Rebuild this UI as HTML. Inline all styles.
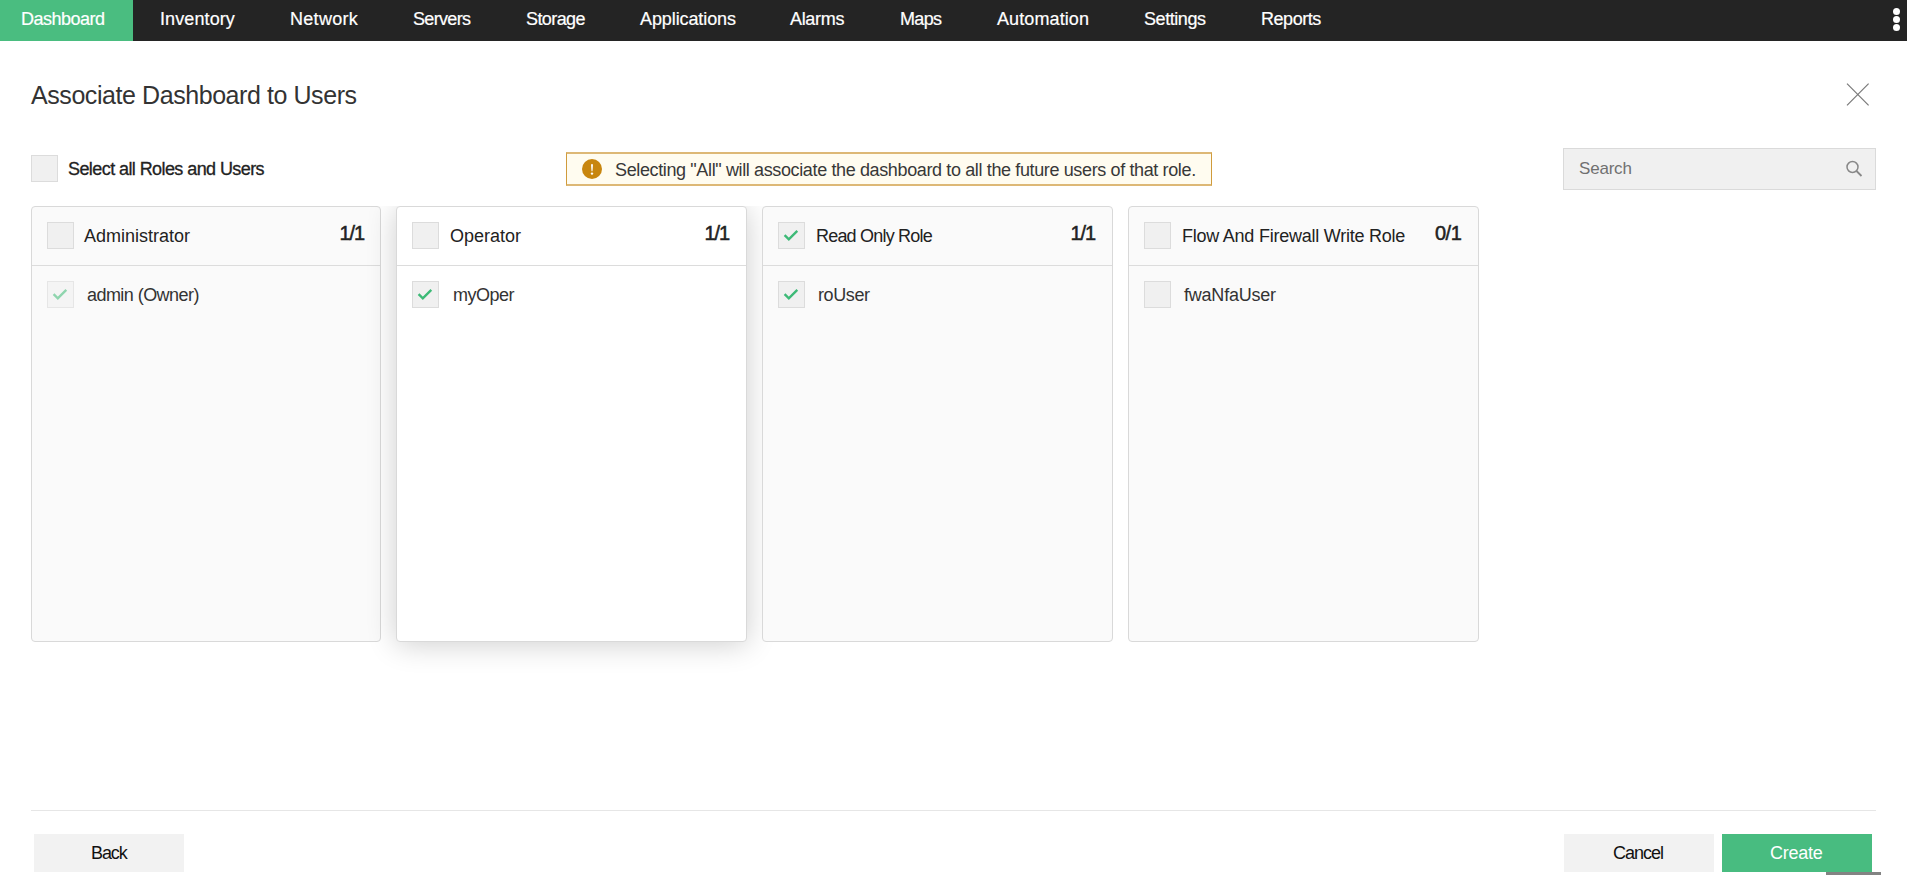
<!DOCTYPE html>
<html><head><meta charset="utf-8">
<style>
html,body{margin:0;padding:0;width:1907px;height:875px;overflow:hidden;background:#fff;}
body{position:relative;font-family:"Liberation Sans",sans-serif;}
.a{position:absolute;}
.t{position:absolute;white-space:nowrap;font-size:18px;line-height:18px;color:#333;}
.nav{position:absolute;left:0;top:0;width:1907px;height:41px;background:#242424;}
.nav .t{color:#fff;top:10px;-webkit-text-stroke:0.2px #fff;}
.navact{position:absolute;left:0;top:0;width:133px;height:41px;background:#4abd80;}
.dot{position:absolute;left:1892.5px;width:7px;height:7px;border-radius:50%;background:#fff;}
.cb{position:absolute;width:25px;height:25px;border:1px solid #dcdcdc;background:#f0f0f0;}
.card{position:absolute;top:206px;width:348px;height:434px;border:1px solid #d9d9d9;border-radius:4px;background:#fafafa;}
.card .hdr{position:absolute;left:0;top:58px;width:348px;height:1px;background:#dcdcdc;}
.cnt{font-size:20px !important;line-height:20px !important;color:#222;-webkit-text-stroke:0.5px #222;letter-spacing:-1.1px;}
.btn{position:absolute;top:834px;width:150px;height:38px;background:#f2f2f2;}
</style></head>
<body>
<div class="nav">
  <div class="navact"></div>
  <div class="t" style="left:21px;letter-spacing:-0.5px">Dashboard</div>
  <div class="t" style="left:160px;letter-spacing:0.1px">Inventory</div>
  <div class="t" style="left:290px;letter-spacing:0.3px">Network</div>
  <div class="t" style="left:413px;letter-spacing:-0.67px">Servers</div>
  <div class="t" style="left:526px;letter-spacing:-0.58px">Storage</div>
  <div class="t" style="left:640px;letter-spacing:-0.1px">Applications</div>
  <div class="t" style="left:790px;letter-spacing:-0.32px">Alarms</div>
  <div class="t" style="left:900px;letter-spacing:-0.67px">Maps</div>
  <div class="t" style="left:997px;letter-spacing:0.1px">Automation</div>
  <div class="t" style="left:1144px;letter-spacing:-0.43px">Settings</div>
  <div class="t" style="left:1261px;letter-spacing:-0.45px">Reports</div>
  <div class="dot" style="top:8px"></div>
  <div class="dot" style="top:16px"></div>
  <div class="dot" style="top:24px"></div>
</div>

<div class="t" style="left:31px;top:83px;font-size:25px;line-height:25px;color:#333;letter-spacing:-0.43px">Associate Dashboard to Users</div>
<svg class="a" style="left:1845px;top:82px" width="25" height="25" viewBox="0 0 25 25"><path d="M2 1.6L23.6 23.4M23.6 1.6L2 23.4" stroke="#7a7a7a" stroke-width="1.2" fill="none"/></svg>

<div class="cb" style="left:31px;top:155px"></div>
<div class="t" style="left:68px;top:159.6px;color:#222;-webkit-text-stroke:0.3px #222;letter-spacing:-0.58px">Select all Roles and Users</div>

<div class="a" style="left:566px;top:152px;width:644px;height:30px;border-top:2px solid #ddb876;border-bottom:2px solid #ddb876;border-left:1px solid #d09b3c;border-right:1px solid #d09b3c;background:#fffcf0;"></div>
<div class="a" style="left:582.3px;top:158.5px;width:20px;height:20px;border-radius:50%;background:#c8860f;"></div>
<svg class="a" style="left:582.3px;top:158.5px" width="20" height="20" viewBox="0 0 20 20"><path d="M9 5.2L11 5.2L10.5 12.3L9.5 12.3Z" fill="#fff"/><circle cx="10" cy="14.6" r="1.2" fill="#fff"/></svg>
<div class="t" style="left:615px;top:161px;color:#383838;letter-spacing:-0.37px">Selecting "All" will associate the dashboard to all the future users of that role.</div>

<div class="a" style="left:1563px;top:148px;width:311px;height:40px;border:1px solid #dadada;background:#f0f0f0;"></div>
<div class="t" style="left:1579px;top:160px;font-size:17px;line-height:17px;color:#707070;letter-spacing:-0.2px">Search</div>
<svg class="a" style="left:1844px;top:158px" width="22" height="22" viewBox="0 0 22 22"><circle cx="8.5" cy="9" r="5.5" stroke="#888" stroke-width="1.5" fill="none"/><path d="M12.5 13L17.5 18" stroke="#888" stroke-width="1.8"/></svg>

<!-- cards -->
<div class="card" style="left:31px"><div class="hdr"></div></div>
<div class="card" style="left:396px;width:349px;background:#fff;box-shadow:0 2px 30px rgba(0,0,0,0.2);clip-path:inset(0 -60px -60px -60px)"><div class="hdr" style="width:349px"></div></div>
<div class="card" style="left:762px;width:349px"><div class="hdr" style="width:349px"></div></div>
<div class="card" style="left:1128px;width:349px"><div class="hdr" style="width:349px"></div></div>

<!-- card 1 -->
<div class="cb" style="left:47px;top:222px"></div>
<div class="t" style="left:84px;top:227px;color:#222">Administrator</div>
<div class="t cnt" style="left:339.5px;top:223px">1/1</div>
<div class="cb" style="left:47px;top:281px;border-color:#e6e6e6;background:#f4f4f4"></div>
<svg class="a" style="left:47px;top:281px" width="27" height="27" viewBox="0 0 27 27"><path d="M6.6 13.2L10.8 17.3L19.3 8.8" stroke="#8fd5ae" stroke-width="2.4" stroke-linejoin="miter" fill="none"/></svg>
<div class="t" style="left:87px;top:286px;letter-spacing:-0.55px">admin (Owner)</div>

<!-- card 2 -->
<div class="cb" style="left:412px;top:222px"></div>
<div class="t" style="left:450px;top:227px;color:#222">Operator</div>
<div class="t cnt" style="left:704.5px;top:223px">1/1</div>
<div class="cb" style="left:412px;top:281px"></div>
<svg class="a" style="left:412px;top:281px" width="27" height="27" viewBox="0 0 27 27"><path d="M6.6 13.2L10.8 17.3L19.3 8.8" stroke="#3dba77" stroke-width="2.4" stroke-linejoin="miter" fill="none"/></svg>
<div class="t" style="left:453px;top:286px;letter-spacing:-0.52px">myOper</div>

<!-- card 3 -->
<div class="cb" style="left:778px;top:222px"></div>
<svg class="a" style="left:778px;top:222px" width="27" height="27" viewBox="0 0 27 27"><path d="M6.6 13.2L10.8 17.3L19.3 8.8" stroke="#3dba77" stroke-width="2.4" stroke-linejoin="miter" fill="none"/></svg>
<div class="t" style="left:816px;top:227px;color:#222;letter-spacing:-0.8px">Read Only Role</div>
<div class="t cnt" style="left:1070.5px;top:223px">1/1</div>
<div class="cb" style="left:778px;top:281px"></div>
<svg class="a" style="left:778px;top:281px" width="27" height="27" viewBox="0 0 27 27"><path d="M6.6 13.2L10.8 17.3L19.3 8.8" stroke="#3dba77" stroke-width="2.4" stroke-linejoin="miter" fill="none"/></svg>
<div class="t" style="left:818px;top:286px;letter-spacing:-0.4px">roUser</div>

<!-- card 4 -->
<div class="cb" style="left:1144px;top:222px"></div>
<div class="t" style="left:1182px;top:227px;color:#222;letter-spacing:-0.24px">Flow And Firewall Write Role</div>
<div class="t cnt" style="left:1435px;top:223px;letter-spacing:-0.5px">0/1</div>
<div class="cb" style="left:1144px;top:281px"></div>
<div class="t" style="left:1184px;top:286px;letter-spacing:-0.22px">fwaNfaUser</div>

<div class="a" style="left:31px;top:810px;width:1845px;height:1px;background:#e6e6e6"></div>

<div class="btn" style="left:34px"></div>
<div class="t" style="left:91px;top:844px;color:#111;letter-spacing:-1.1px">Back</div>
<div class="btn" style="left:1564px"></div>
<div class="t" style="left:1613px;top:844px;color:#111;letter-spacing:-1px">Cancel</div>
<div class="btn" style="left:1722px;background:#48bc80"></div>
<div class="t" style="left:1770px;top:844px;color:#fff;letter-spacing:-0.24px">Create</div>
<div class="a" style="left:1826px;top:872px;width:55px;height:3px;background:#838383"></div>
</body></html>
